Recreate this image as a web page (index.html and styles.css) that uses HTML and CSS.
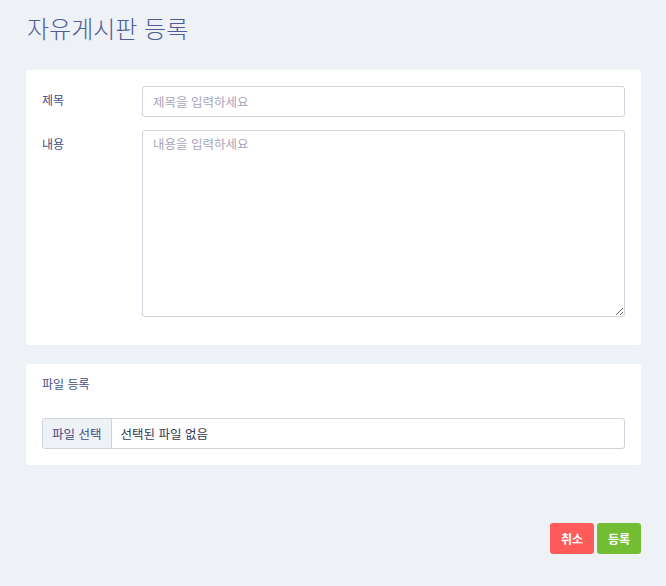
FILE: index.html
```html
<!DOCTYPE html>
<html lang="ko">
<head>
<meta charset="utf-8">
<link rel="stylesheet" href="styles.css">
</head>
<body>
<div class="page">
  <h1 class="title">자유게시판 등록</h1>
  <div class="card card-main">
    <div class="row">
      <label class="label">제목</label>
      <input class="input" type="text" placeholder="제목을 입력하세요">
    </div>
    <div class="row">
      <label class="label">내용</label>
      <textarea class="textarea" placeholder="내용을 입력하세요"></textarea>
    </div>
  </div>
  <div class="card card-file">
    <div class="file-title">파일 등록</div>
    <div class="file-input">
      <span class="file-btn">파일 선택</span>
      <span class="file-name">선택된 파일 없음</span>
    </div>
  </div>
  <div class="actions">
    <button class="btn btn-cancel">취소</button>
    <button class="btn btn-submit">등록</button>
  </div>
</div>
</body>
</html>
```
FILE: styles.css
```css
* { box-sizing: border-box; }
html, body { margin: 0; padding: 0; }
body {
  background: #eef1f6;
  font-family: "Noto Sans CJK KR", "Noto Sans", sans-serif;
  color: #3f4e7f;
}
.page {
  padding: 11px 25px 0 26px;
}
.title {
  margin: 0 0 25px 1px;
  font-size: 24px;
  font-weight: 300;
  line-height: 34px;
  color: #4d5d95;
}
.card {
  background: #fff;
  border-radius: 3px;
}
.card-main {
  padding: 16px 16px 28px 16px;
  display: flex;
  flex-direction: column;
  gap: 13px;
}
.row {
  display: flex;
  align-items: flex-start;
}
.label {
  width: 100px;
  flex: none;
  font-size: 12px;
  line-height: 27px;
  color: #3f4e85;
}
.input, .textarea {
  flex: 1;
  border: 1px solid #cfd3dc;
  border-radius: 3px;
  font-family: inherit;
  font-size: 12.5px;
  color: #333;
  padding: 0 10px;
  outline: none;
  background: #fff;
}
.input { height: 31px; }
.textarea {
  height: 187px;
  padding: 4px 10px;
  resize: vertical;
  line-height: 18px;
}
.input::placeholder, .textarea::placeholder { color: #a9a4bd; }
.card-file {
  margin-top: 19px;
  padding: 10px 16px 16px 16px;
}
.file-title {
  font-size: 12px;
  line-height: 20px;
  color: #3f4e85;
  margin-bottom: 24px;
}
.file-input {
  display: flex;
  height: 31px;
  border: 1px solid #cfd3dc;
  border-radius: 3px;
  font-size: 12.5px;
  overflow: hidden;
}
.file-btn {
  background: #eef1f6;
  border-right: 1px solid #cfd3dc;
  padding: 0 9px 0 9px;
  line-height: 29px;
  color: #3f4e85;
}
.file-name {
  padding: 0 10px 0 9px;
  line-height: 29px;
  color: #333a55;
}
.actions {
  display: flex;
  justify-content: flex-end;
  gap: 3px;
  margin-top: 58px;
}
.btn {
  width: 44px;
  height: 31px;
  border: none;
  border-radius: 3px;
  color: #fff;
  font-family: inherit;
  font-size: 12px;
  font-weight: 700;
  padding: 0;
}
.btn-cancel { background: #ff5b5b; }
.btn-submit { background: #73bd35; }
```
